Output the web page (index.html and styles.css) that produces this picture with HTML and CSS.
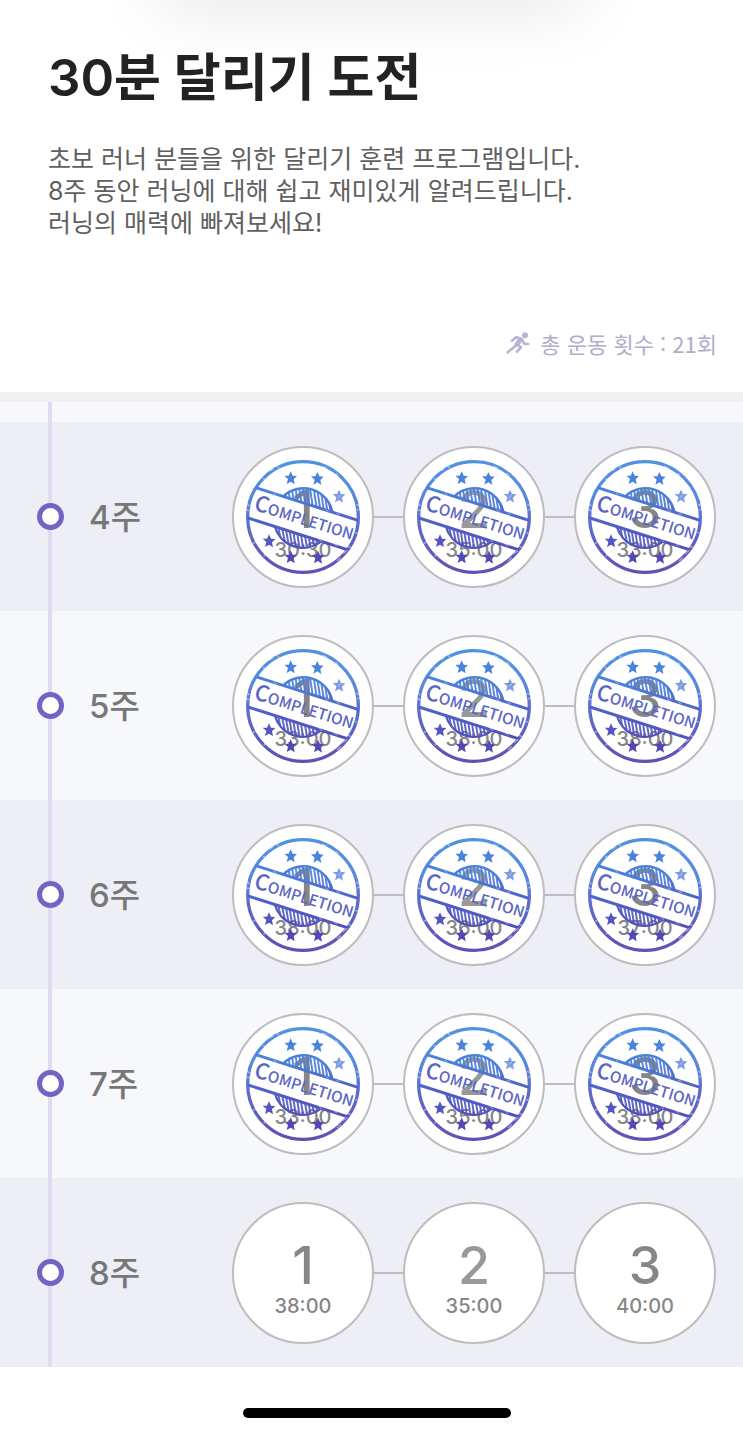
FILE: index.html
```html
<!DOCTYPE html>
<html lang="ko">
<head>
<meta charset="utf-8">
<meta name="viewport" content="width=device-width, initial-scale=1">
<title>30분 달리기 도전</title>
<link rel="stylesheet" href="styles.css">
</head>
<body>
<svg class="defs" width="0" height="0" aria-hidden="true">
  <defs>
    <linearGradient id="ink" gradientUnits="userSpaceOnUse" x1="0" y1="72" x2="0" y2="414">
      <stop offset="0" stop-color="#4288e0"/>
      <stop offset="0.3" stop-color="#4a80dc"/>
      <stop offset="0.55" stop-color="#5060c8"/>
      <stop offset="1" stop-color="#5340ac"/>
    </linearGradient>
    <clipPath id="seal-top"><path d="M178 181A88 88 0 0 1 325 228Z"/></clipPath>
    <clipPath id="seal-bottom"><path d="M152 270A88 88 0 0 0 292 316Z"/></clipPath>
    <path id="star" d="M0-20L6-7L19-6L9 4L12 19L0 11L-12 18L-8 3L-19-7L-6-7Z"/>
    <symbol id="stamp" viewBox="66 72 342 342">
      <g fill="none" stroke="url(#ink)">
        <circle cx="237" cy="243" r="166" stroke-width="10" opacity=".92"/>
        <path d="M95 155L402 253M72 246L370 341" stroke-width="9"/>
        <g clip-path="url(#seal-top)" opacity=".9">
          <path d="M180 150l12 70M191 150l12 70M202 150l12 70M213 150l12 70M224 150l12 70M235 150l12 70M246 150l12 70M257 150l12 80M268 150l12 80M279 155l12 80M290 160l12 80M301 165l12 80M312 175l12 80" stroke-width="6"/>
        </g>
        <path d="M178 181A88 88 0 0 1 325 228" stroke-width="7"/>
        <g clip-path="url(#seal-bottom)" opacity=".9">
          <path d="M149 260l12 45M160 260l12 60M171 260l12 60M182 260l12 65M193 260l12 75M204 260l12 80M215 260l12 80M226 265l12 75M237 265l12 70M248 270l12 65M259 275l12 60M270 280l12 55M281 290l12 40" stroke-width="6"/>
        </g>
        <path d="M152 270A88 88 0 0 0 292 316" stroke-width="7"/>
      </g>
      <g>
        <use href="#star" x="200" y="126" fill="#4b82dc"/>
        <use href="#star" x="280" y="128" fill="#4b82dc"/>
        <use href="#star" x="345" y="181" fill="#7d9be2"/>
        <use href="#star" x="135" y="315" fill="#5455bf"/>
        <use href="#star" x="200" y="363" fill="#5348b4"/>
        <use href="#star" x="282" y="364" fill="#5348b4"/>
      </g>
      <text class="stamp-text" transform="translate(87 221) rotate(17)"><tspan class="stamp-cap">C</tspan>OMPLETION</text>
      <g fill="none" stroke="#fff" stroke-linecap="round" opacity=".45">
        <path d="M138 104l9-5M160 92l4 3M118 128l5 2M296 91l12 5M336 112l6 7M398 205l8 5M400 222l7-3M68 222l8 2M70 204l5 5M88 322l6-4M120 360l5-6M340 374l9-8M358 352l10-8M372 330l7 4M395 290l5 2" stroke-width="4"/>
        <path d="M150 171l6 6M306 222l7 5M338 233l8 2M284 309l9 8M330 324l9 6M350 177l-8 7" stroke-width="3"/>
      </g>
    </symbol>
  </defs>
</svg>

<main class="app">
  <header class="intro">
    <h1 class="title">30분 달리기 도전</h1>
    <p class="description">초보 러너 분들을 위한 달리기 훈련 프로그램입니다.<br>8주 동안 러닝에 대해 쉽고 재미있게 알려드립니다.<br>러닝의 매력에 빠져보세요!</p>
    <p class="total">
      <svg class="runner" viewBox="0 0 72 66" aria-hidden="true">
        <circle cx="57" cy="10" r="9"/>
        <path d="M18 26L31 15L47 22L35 38L45 46L33 59M49 24L54 35L66 36M28 42L20 49L5 61"/>
        <path class="torso" d="M43 23L32 37"/>
      </svg>
      <span>총 운동 횟수 : 21회</span>
    </p>
  </header>

  <ol class="weeks">
    <li class="week">
      <span class="dot"></span><h2 class="label">4주</h2>
      <div class="runs">
        <button class="run" type="button"><span class="number">1</span><span class="time">30:30</span><svg class="stamp" aria-hidden="true"><use href="#stamp"/></svg></button>
        <button class="run" type="button"><span class="number soft">2</span><span class="time">35:00</span><svg class="stamp" aria-hidden="true"><use href="#stamp"/></svg></button>
        <button class="run" type="button"><span class="number">3</span><span class="time">33:00</span><svg class="stamp" aria-hidden="true"><use href="#stamp"/></svg></button>
      </div>
    </li>
    <li class="week">
      <span class="dot"></span><h2 class="label">5주</h2>
      <div class="runs">
        <button class="run" type="button"><span class="number">1</span><span class="time">33:00</span><svg class="stamp" aria-hidden="true"><use href="#stamp"/></svg></button>
        <button class="run" type="button"><span class="number soft">2</span><span class="time">38:00</span><svg class="stamp" aria-hidden="true"><use href="#stamp"/></svg></button>
        <button class="run" type="button"><span class="number">3</span><span class="time">38:00</span><svg class="stamp" aria-hidden="true"><use href="#stamp"/></svg></button>
      </div>
    </li>
    <li class="week">
      <span class="dot"></span><h2 class="label">6주</h2>
      <div class="runs">
        <button class="run" type="button"><span class="number">1</span><span class="time">38:00</span><svg class="stamp" aria-hidden="true"><use href="#stamp"/></svg></button>
        <button class="run" type="button"><span class="number soft">2</span><span class="time">36:00</span><svg class="stamp" aria-hidden="true"><use href="#stamp"/></svg></button>
        <button class="run" type="button"><span class="number">3</span><span class="time">37:00</span><svg class="stamp" aria-hidden="true"><use href="#stamp"/></svg></button>
      </div>
    </li>
    <li class="week">
      <span class="dot"></span><h2 class="label">7주</h2>
      <div class="runs">
        <button class="run" type="button"><span class="number">1</span><span class="time">33:00</span><svg class="stamp" aria-hidden="true"><use href="#stamp"/></svg></button>
        <button class="run" type="button"><span class="number soft">2</span><span class="time">35:00</span><svg class="stamp" aria-hidden="true"><use href="#stamp"/></svg></button>
        <button class="run" type="button"><span class="number">3</span><span class="time">38:00</span><svg class="stamp" aria-hidden="true"><use href="#stamp"/></svg></button>
      </div>
    </li>
    <li class="week">
      <span class="dot"></span><h2 class="label">8주</h2>
      <div class="runs">
        <button class="run" type="button"><span class="number">1</span><span class="time">38:00</span></button>
        <button class="run" type="button"><span class="number soft">2</span><span class="time">35:00</span></button>
        <button class="run" type="button"><span class="number">3</span><span class="time">40:00</span></button>
      </div>
    </li>
  </ol>
  <div class="home-area"><div class="home-indicator"></div></div>
</main>
</body>
</html>
```
FILE: styles.css
```css
* {
  box-sizing: border-box;
}

body {
  margin: 0;
  background: #fff;
  font-family: Inter, "Noto Sans CJK KR", sans-serif;
}

h1,
h2,
p {
  margin: 0;
}

.defs {
  position: absolute;
}

.app {
  overflow: hidden;
}

.intro {
  position: relative;
  padding: 46px 26px 33px 48px;
  border-bottom: 10px solid #f0f0f0;
}

/* Shadow cast by the card above the visible area */
.intro::before {
  content: "";
  position: absolute;
  top: -60px;
  left: 24%;
  right: 24%;
  height: 40px;
  box-shadow: 0 10px 70px 20px rgba(0, 0, 0, 0.09);
}

.title {
  position: relative;
  font-size: 51px;
  line-height: 64px;
  font-weight: 600;
  color: #222;
}

.description {
  margin-top: 33px;
  font-size: 25px;
  line-height: 32px;
  color: #606060;
}

.total {
  display: flex;
  justify-content: flex-end;
  align-items: center;
  gap: 10px;
  margin-top: 88px;
  font-family: "Noto Sans CJK KR", sans-serif;
  font-size: 22px;
  line-height: 32px;
  color: #b0accb;
}

.runner {
  width: 24px;
  height: 22px;
  fill: none;
  stroke: #b8b4d2;
  stroke-width: 8;
  stroke-linecap: round;
  stroke-linejoin: round;
}

.runner circle {
  fill: #b8b4d2;
  stroke: none;
}

.runner .torso {
  stroke-width: 14;
}

.weeks {
  position: relative;
  margin: 0;
  padding: 20px 0 0;
  list-style: none;
  background: #f7f8fc;
}

.weeks::before {
  content: "";
  position: absolute;
  top: 0;
  bottom: 0;
  left: 48px;
  width: 4px;
  background: #dfdcef;
  z-index: 1;
}

.week {
  display: flex;
  align-items: center;
  min-height: 189px;
  padding: 0 27px 0 37px;
}

.week:nth-child(odd) {
  background: #edeef6;
}

.dot {
  position: relative;
  z-index: 2;
  width: 27px;
  height: 27px;
  border: 5px solid #7463c5;
  border-radius: 50%;
  background: #fff;
}

.label {
  margin-left: 25px;
  font-size: 33px;
  line-height: 48px;
  font-weight: 500;
  color: #777;
}

.runs {
  display: flex;
  align-items: center;
  gap: 29px;
  margin-left: auto;
}

.run {
  position: relative;
  display: flex;
  flex-direction: column;
  align-items: center;
  width: 142px;
  height: 142px;
  padding: 34px 0 0;
  border: 2px solid #bdbdc0;
  border-radius: 50%;
  background: #fff;
  font-family: Inter, sans-serif;
  color: #868686;
}

.run + .run::before {
  content: "";
  position: absolute;
  top: 68px;
  right: 100%;
  width: 31px;
  height: 2px;
  background: #bdbdc0;
}

.number {
  font-size: 52px;
  line-height: 56px;
  font-weight: 500;
}

.number.soft {
  color: #999;
}

.time {
  font-size: 20px;
  line-height: 24px;
  font-weight: 500;
}

.stamp {
  position: absolute;
  inset: 12px;
  width: 114px;
  height: 114px;
}

.stamp-text {
  font-family: "Noto Sans CJK KR", sans-serif;
  font-size: 46px;
  font-weight: 500;
  fill: #5a65c6;
}

.stamp-cap {
  font-size: 66px;
}

.home-area {
  display: flex;
  justify-content: center;
  padding: 41px 0 14px 10px;
}

.home-indicator {
  width: 36%;
  min-width: 268px;
  height: 10px;
  border-radius: 5px;
  background: #000;
}
```
